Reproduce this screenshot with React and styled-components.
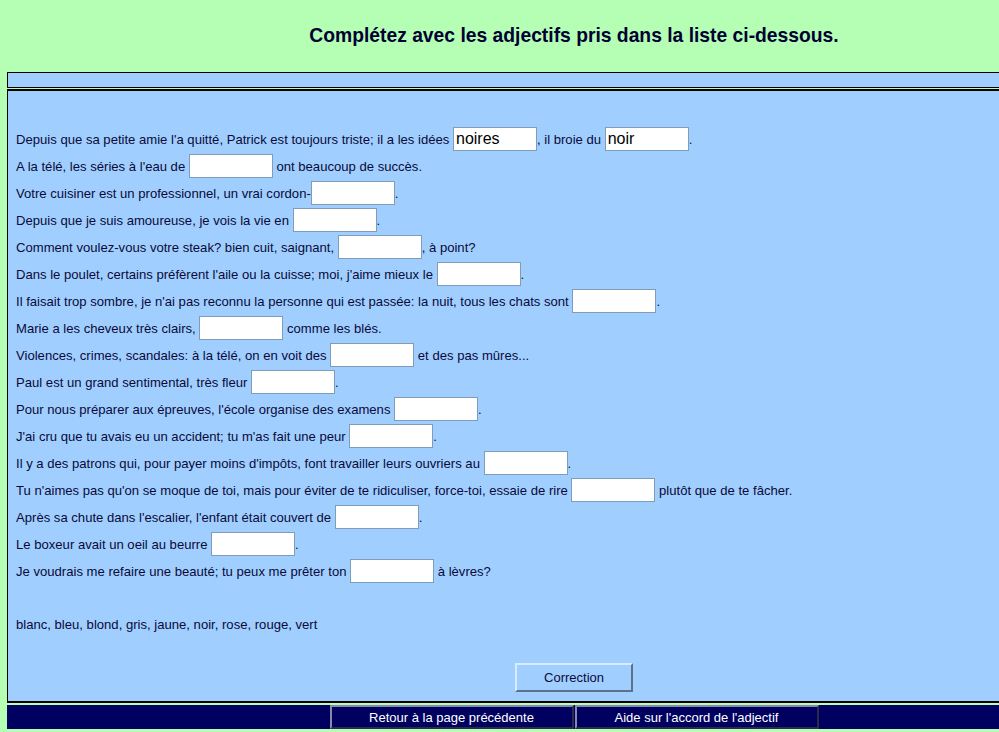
import React, { useEffect, useRef } from 'react';
import styled, { createGlobalStyle } from 'styled-components';

const GlobalStyle = createGlobalStyle`
  html, body {
    margin: 0;
    padding: 0;
    background: #b4ffb4;
    overflow: hidden;
  }
  body {
    font-family: Arial, "Liberation Sans", sans-serif;
    color: #0a0a3a;
  }
`;

const App = () => {
  const caretRef = useRef(null);

  useEffect(() => {
    const el = caretRef.current;
    if (el) {
      el.focus();
      el.setSelectionRange(el.value.length, el.value.length);
    }
  }, []);

  return (
    <Page>
      <GlobalStyle />
      <Title>Complétez avec les adjectifs pris dans la liste ci-dessous.</Title>
      <TopBar />
      <Panel>
        <Sentences>
          {sentences.map((parts, i) => (
            <Line key={i}>
              {parts.map((p, j) =>
                typeof p === 'string' ? (
                  <React.Fragment key={j}>{p}</React.Fragment>
                ) : (
                  <Field
                    key={j}
                    defaultValue={p.value}
                    ref={p.caret ? caretRef : undefined}
                  />
                )
              )}
            </Line>
          ))}
        </Sentences>
        <WordList>blanc, bleu, blond, gris, jaune, noir, rose, rouge, vert</WordList>
        <Actions>
          <CorrectionButton>Correction</CorrectionButton>
        </Actions>
      </Panel>
      <Footer>
        <NavButton>Retour à la page précédente</NavButton>
        <NavButton>Aide sur l'accord de l'adjectif</NavButton>
      </Footer>
    </Page>
  );
};

export default App;

const Page = styled.div`
  width: 1134px;
  margin-left: 7px;
  height: 732px;
`;

const Title = styled.h1`
  margin: 0;
  height: 72px;
  display: flex;
  align-items: center;
  justify-content: center;
  box-sizing: border-box;
  font-size: 19.3px;
  font-weight: bold;
  color: #000033;
`;

const TopBar = styled.div`
  height: 16px;
  box-sizing: border-box;
  border: 1px solid #000;
  background: #a0cfff;
  margin-bottom: 1px;
`;

const Panel = styled.div`
  height: 614px;
  box-sizing: border-box;
  border: 1px solid #000;
  border-width: 2px 1px 2px 1px;
  background: #a0cfff;
  padding: 35px 8px 0;
  font-size: 13.1px;
  margin-bottom: 2px;
`;

const Sentences = styled.div`
  display: flex;
  flex-direction: column;
`;

const Line = styled.div`
  height: 27px;
  line-height: 27px;
  white-space: pre;
`;

const Field = styled.input.attrs({ type: 'text' })`
  width: 84px;
  height: 24px;
  box-sizing: border-box;
  border: 1px solid #7f9db9;
  background: #fff;
  margin: 0;
  padding: 0 2px;
  font-family: Arial, "Liberation Sans", sans-serif;
  font-size: 16px;
  color: #000;
  outline: none;
  caret-color: #000;
  vertical-align: middle;
  position: relative;
  top: -2px;
`;

const WordList = styled.div`
  margin-top: 26px;
  height: 27px;
  line-height: 27px;
`;

const Actions = styled.div`
  display: flex;
  justify-content: center;
  margin-top: 25px;
`;

const CorrectionButton = styled.button`
  width: 118px;
  height: 29px;
  box-sizing: border-box;
  background: #a0cfff;
  border: 2px solid;
  border-color: #d8ecff #5d718c #5d718c #d8ecff;
  font-family: Arial, "Liberation Sans", sans-serif;
  font-size: 13px;
  color: #0a0a3a;
  padding: 0;
`;

const Footer = styled.div`
  height: 24px;
  background: #000060;
  display: flex;
  justify-content: center;
`;

const NavButton = styled.button`
  width: 244px;
  height: 24px;
  box-sizing: border-box;
  background: #000060;
  border: 2px solid;
  border-color: #8888aa #2a2a4a #2a2a4a #8888aa;
  color: #fff;
  font-family: Arial, "Liberation Sans", sans-serif;
  font-size: 13px;
  padding: 0;

  & + & {
    margin-left: 1px;
  }
`;

const f = (value = '', caret = false) => ({ value, caret });

const sentences = [
  ["Depuis que sa petite amie l'a quitté, Patrick est toujours triste; il a les idées ", f('noires'), ', il broie du ', f('noir', true), '.'],
  ["A la télé, les séries à l'eau de ", f(), ' ont beaucoup de succès.'],
  ['Votre cuisiner est un professionnel, un vrai cordon-', f(), '.'],
  ['Depuis que je suis amoureuse, je vois la vie en ', f(), '.'],
  ['Comment voulez-vous votre steak? bien cuit, saignant, ', f(), ', à point?'],
  ["Dans le poulet, certains préfèrent l'aile ou la cuisse; moi, j'aime mieux le ", f(), '.'],
  ["Il faisait trop sombre, je n'ai pas reconnu la personne qui est passée: la nuit, tous les chats sont ", f(), '.'],
  ['Marie a les cheveux très clairs, ', f(), ' comme les blés.'],
  ['Violences, crimes, scandales: à la télé, on en voit des ', f(), ' et des pas mûres...'],
  ['Paul est un grand sentimental, très fleur ', f(), '.'],
  ["Pour nous préparer aux épreuves, l'école organise des examens ", f(), '.'],
  ["J'ai cru que tu avais eu un accident; tu m'as fait une peur ", f(), '.'],
  ["Il y a des patrons qui, pour payer moins d'impôts, font travailler leurs ouvriers au ", f(), '.'],
  ["Tu n'aimes pas qu'on se moque de toi, mais pour éviter de te ridiculiser, force-toi, essaie de rire ", f(), ' plutôt que de te fâcher.'],
  ["Après sa chute dans l'escalier, l'enfant était couvert de ", f(), '.'],
  ['Le boxeur avait un oeil au beurre ', f(), '.'],
  ['Je voudrais me refaire une beauté; tu peux me prêter ton ', f(), ' à lèvres?'],
];
